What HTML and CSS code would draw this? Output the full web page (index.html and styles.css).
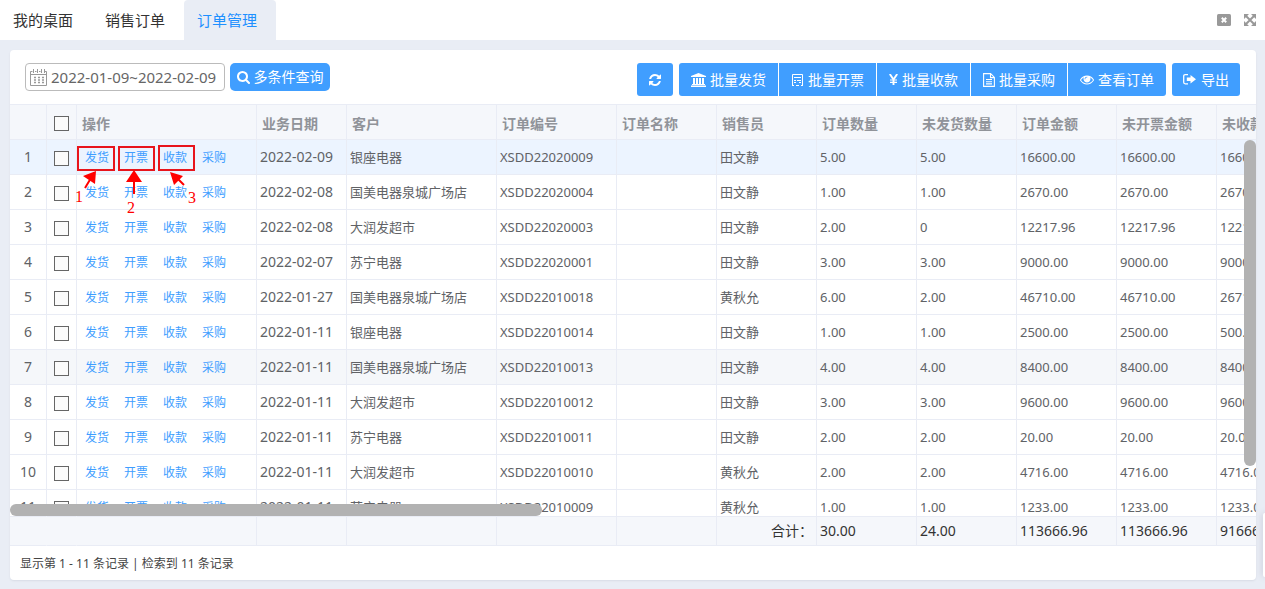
FILE: index.html
```html
<!DOCTYPE html>
<html lang="zh-CN">
<head>
<meta charset="utf-8">
<title>订单管理</title>
<link rel="stylesheet" href="styles.css">
</head>
<body>
<header class="tabbar">
  <nav class="tabs">
    <a class="tab" href="#desktop">我的桌面</a>
    <a class="tab" href="#sales">销售订单</a>
    <a class="tab tab-active" href="#orders">订单管理</a>
  </nav>
  <div class="window-tools">
    <button class="tool" aria-label="关闭"><svg width="14" height="12" viewBox="0 0 14 12"><rect width="14" height="12" rx="1.5" fill="#999"/><path d="M4.800 3.800l4.400 4.400M9.200 3.800l-4.400 4.400" stroke="#fff" stroke-width="2"/></svg></button>
    <button class="tool" aria-label="全屏"><svg width="12" height="12" viewBox="0 0 12 12"><path d="M0 0h5L0 5zM12 0v5L7 0zM0 12V7l5 5zM12 12H7l5-5z" fill="#999"/><path d="M2 2l8 8M10 2l-8 8" stroke="#999" stroke-width="2"/></svg></button>
  </div>
</header>

<main class="panel">
  <div class="toolbar">
    <div class="filters">
      <label class="date-field">
        <svg class="calendar" width="17" height="17" viewBox="0 0 17 17" fill="none" stroke="#999"><path d="M2.500 2.500h-2v14h16v-14h-2M5 2.500h1.500M9 2.500h1.500M.5 5.500h16M3.500 0v4M7.500 0v4M11.500 0v4M14.500 0v4"/><path d="M4 8.500h10M4 11h10M4 13.500h10" stroke-width="1.500" stroke-dasharray="2 2"/></svg>
        <input type="text" aria-label="业务日期范围" value="2022-01-09~2022-02-09">
      </label>
      <button class="btn btn-search"><svg width="13" height="13" viewBox="64 128 1664 1664"><path fill="currentColor" d="M1216 832q0-185-131.500-316.500t-316.500-131.500-316.500 131.500-131.500 316.500 131.500 316.500 316.500 131.500 316.500-131.500 131.500-316.500zm512 832q0 52-38 90t-90 38q-54 0-90-38l-343-342q-179 124-399 124-143 0-273.500-55.500t-225-150-150-225-55.500-273.500 55.500-273.500 150-225 225-150 273.500-55.500 273.500 55.500 225 150 150 225 55.500 273.500q0 220-124 399l343 343q37 37 37 90z"/></svg>多条件查询</button>
    </div>
    <div class="actions">
      <button class="btn btn-refresh" aria-label="刷新"><svg width="12" height="12" viewBox="0 0 1536 1536"><path fill="currentColor" d="M1511 928q0 5-1 7-64 268-268 434.500t-478 166.500q-146 0-282.500-55t-243.500-157l-129 129q-19 19-45 19t-45-19-19-45v-448q0-26 19-45t45-19h448q26 0 45 19t19 45-19 45l-137 137q71 66 161 102t187 36q134 0 250-65t186-179q11-17 53-117 8-23 30-23h192q13 0 22.500 9.500t9.500 22.500zm25-800v448q0 26-19 45t-45 19h-448q-26 0-45-19t-19-45 19-45l138-138q-148-137-349-137-134 0-250 65t-186 179q-11 17-53 117-8 23-30 23h-199q-13 0-22.500-9.500t-9.500-22.500v-7q65-268 270-434.500t480-166.500q146 0 284 55.500t245 156.500l130-129q19-19 45-19t45 19 19 45z"/></svg></button>
      <div class="btn-group">
        <button class="btn"><svg width="15" height="14" viewBox="0 0 15 14" fill="currentColor"><path d="M7.500 0L15 3v1H0V3zM2 5h2v6h1V5h2v6h1V5h2v6h1V5h2v6h1v1H1v-1h1zM0 12.500h15V14H0z"/></svg>批量发货</button>
        <button class="btn"><svg width="13" height="13" viewBox="0 0 13 13" fill="none" stroke="currentColor"><path d="M1.500 12V1.500h10V12M1 12.500h2M5 12.500h3M10 12.500h2M3 4.500h7M3 7.500h2M6 7.500h4M3 9.500h2M8 9.500h2"/></svg>批量开票</button>
        <button class="btn"><svg width="9" height="11" viewBox="0 0 9 11" fill="none" stroke="currentColor"><path d="M.8 0l3.700 5.500L8.200 0M4.500 5v6" stroke-width="1.900"/><path d="M1 6h7M1 8.300h7" stroke-width="1.200"/></svg>批量收款</button>
        <button class="btn"><svg width="12" height="14" viewBox="0 0 12 14" fill="none" stroke="currentColor"><path d="M.6.6h7l3.800 3.800v9H.6zM7.500.6v4h4M3 6.500h6M3 8.700h6M3 10.900h6" stroke-width="1.100"/></svg>批量采购</button>
        <button class="btn"><svg width="14" height="10" viewBox="0 384 1792 1152"><path fill="currentColor" d="M1664 960q-152-236-381-353 61 104 61 225 0 185-131.500 316.500t-316.500 131.500-316.500-131.500-131.500-316.500q0-121 61-225-229 117-381 353 133 205 333.500 326.500t434.500 121.500 434.500-121.500 333.500-326.500zm-720-384q0-20-14-34t-34-14q-125 0-214.500 89.500t-89.500 214.500q0 20 14 34t34 14 34-14 14-34q0-86 61-147t147-61q20 0 34-14t14-34zm848 384q0 34-20 69-140 230-376.500 368.500t-499.500 138.500-499.500-139-376.500-368q-20-35-20-69t20-69q140-229 376.500-368t499.500-139 499.500 139 376.500 368q20 35 20 69z"/></svg>查看订单</button>
      </div>
      <button class="btn btn-export"><svg width="13" height="11" viewBox="0 0 13 11"><path d="M5 .7H2.200Q.7.700.7 2.200v6.100q0 1.500 1.500 1.500H5" fill="none" stroke="currentColor" stroke-width="1.300"/><path d="M7.500 1L13 5.300 7.500 9.600V7H3.800V3.600h3.700z" fill="currentColor"/></svg>导出</button>
    </div>
  </div>

  <div class="grid">
    <table class="grid-head">
      <colgroup><col class="c-no"><col class="c-check"><col class="c-ops"><col class="c-date"><col class="c-customer"><col class="c-code"><col span="7" class="c-std"></colgroup>
      <thead><tr><th></th><th class="check"><input type="checkbox" aria-label="全选"></th><th>操作</th><th>业务日期</th><th>客户</th><th>订单编号</th><th>订单名称</th><th>销售员</th><th>订单数量</th><th>未发货数量</th><th>订单金额</th><th>未开票金额</th><th>未收款金额</th></tr></thead>
    </table>
    <div class="grid-body">
      <table>
        <colgroup><col class="c-no"><col class="c-check"><col class="c-ops"><col class="c-date"><col class="c-customer"><col class="c-code"><col span="7" class="c-std"></colgroup>
        <tbody id="rows"></tbody>
      </table>
      <svg class="marks" width="130" height="80" viewBox="70 140 130 80" aria-hidden="true">
        <g fill="none" stroke="#e8141c" stroke-width="2"><rect x="78" y="147" width="36" height="23"/><rect x="119" y="147" width="35" height="23"/><rect x="159" y="146" width="35" height="24"/></g>
        <g stroke="#f00" stroke-width="2"><path d="M85 188l6-10M134 194v-16M184 185l-8-8"/></g>
        <g fill="#f00"><path d="M96 171l-1 13-12-8zM134 170l8 12h-16zM170 172l13 4-9 9z"/></g>
        <g class="mark-text"><text x="75" y="202">1</text><text x="127" y="213">2</text><text x="188" y="203">3</text></g>
      </svg>
      <div class="scroll-x"></div>
      <div class="scroll-y"></div>
    </div>
    <table class="grid-foot">
      <colgroup><col class="c-no"><col class="c-check"><col class="c-ops"><col class="c-date"><col class="c-customer"><col class="c-code"><col span="7" class="c-std"></colgroup>
      <tbody><tr><td class="plain"></td><td class="plain"></td><td></td><td></td><td></td><td></td><td></td><td class="sum">合计：</td><td>30.00</td><td>24.00</td><td>113666.96</td><td>113666.96</td><td>91666.96</td></tr></tbody>
    </table>
  </div>
  <footer class="pager">显示第 1 - 11 条记录 | 检索到 11 条记录</footer>
</main>
<aside class="drawer"></aside>
<script src="rows.js"></script>
</body>
</html>
```
FILE: rows.js
```js
const orders = [
  ['2022-02-09', '银座电器', 'XSDD22020009', '田文静', '5.00', '5.00', '16600.00', '16600.00', '16600.00'],
  ['2022-02-08', '国美电器泉城广场店', 'XSDD22020004', '田文静', '1.00', '1.00', '2670.00', '2670.00', '2670.00'],
  ['2022-02-08', '大润发超市', 'XSDD22020003', '田文静', '2.00', '0', '12217.96', '12217.96', '12217.96'],
  ['2022-02-07', '苏宁电器', 'XSDD22020001', '田文静', '3.00', '3.00', '9000.00', '9000.00', '9000.00'],
  ['2022-01-27', '国美电器泉城广场店', 'XSDD22010018', '黄秋允', '6.00', '2.00', '46710.00', '46710.00', '26710.00'],
  ['2022-01-11', '银座电器', 'XSDD22010014', '田文静', '1.00', '1.00', '2500.00', '2500.00', '500.00'],
  ['2022-01-11', '国美电器泉城广场店', 'XSDD22010013', '田文静', '4.00', '4.00', '8400.00', '8400.00', '8400.00'],
  ['2022-01-11', '大润发超市', 'XSDD22010012', '田文静', '3.00', '3.00', '9600.00', '9600.00', '9600.00'],
  ['2022-01-11', '苏宁电器', 'XSDD22010011', '田文静', '2.00', '2.00', '20.00', '20.00', '20.00'],
  ['2022-01-11', '大润发超市', 'XSDD22010010', '黄秋允', '2.00', '2.00', '4716.00', '4716.00', '4716.00'],
  ['2022-01-11', '苏宁电器', 'XSDD22010009', '黄秋允', '1.00', '1.00', '1233.00', '1233.00', '1233.00']
];
const links = ['发货', '开票', '收款', '采购'].map(t => `<a href="#">${t}</a>`).join('');
document.getElementById('rows').innerHTML = orders.map((o, i) => {
  const state = i === 0 ? 'selected' : i === 6 ? 'hovered' : '';
  const [date, customer, code, ...rest] = o;
  return `<tr class="${state}"><td class="no">${i + 1}</td>` +
    `<td class="check"><input type="checkbox" aria-label="选择第${i + 1}行"></td>` +
    `<td><div class="ops">${links}</div></td><td class="date">${date}</td><td>${customer}</td><td>${code}</td><td></td>` +
    rest.map(v => `<td>${v}</td>`).join('') + '</tr>';
}).join('');
```
FILE: styles.css
```css
* { box-sizing: border-box; }
body {
  margin: 0;
  height: 100vh;
  display: flex;
  flex-direction: column;
  overflow: hidden;
  background: #e9edf5;
  color: #606266;
  font: 13px/20px "Noto Sans", "Noto Sans CJK SC", sans-serif;
}
a { text-decoration: none; }
button, input { font: inherit; margin: 0; }
button { border: 0; padding: 0; cursor: pointer; }

.tabbar { display: flex; justify-content: space-between; flex: none; height: 40px; background: #fff; }
.tabs { display: flex; }
.tab { padding: 0 19px 0 13px; font-size: 15px; line-height: 40px; color: #333; }
.tab-active { background: #e9edf5; color: #1e90ff; border-radius: 4px 4px 0 0; }
.window-tools { display: flex; align-items: center; gap: 13px; padding-right: 9px; }
.tool { display: flex; background: none; }

.panel {
  flex: 1;
  min-height: 0;
  display: flex;
  flex-direction: column;
  margin: 10px 9px 9px 10px;
  background: #fff;
  border-radius: 4px;
  box-shadow: 0 1px 2px #d8dce5;
  overflow: hidden;
}
.toolbar { display: flex; justify-content: space-between; flex: none; height: 54px; padding: 13px 16px 0 15px; }
.filters, .actions { display: flex; align-items: flex-start; gap: 5px; }
.actions { gap: 6px; }
.date-field {
  display: flex;
  align-items: center;
  gap: 4px;
  width: 200px;
  height: 28px;
  padding: 0 4px;
  border: 1px solid #bbb;
  border-radius: 4px;
}
.calendar { flex: none; }
.date-field input { flex: 1; min-width: 0; padding: 0; border: 0; outline: 0; background: none; color: #666; font-size: 15px; }
.btn {
  display: flex;
  align-items: center;
  justify-content: center;
  gap: 4px;
  height: 33px;
  padding: 0 12px;
  background: #409eff;
  color: #fff;
  font-size: 14px;
  border-radius: 3px;
  white-space: nowrap;
}
.btn-search { height: 28px; width: 100px; padding: 0; border-radius: 5px; }
.btn-refresh { width: 36px; }
.btn-export { gap: 5px; }
.btn-export { padding: 0 11px; }
.btn-group { display: flex; gap: 1px; }
.btn-group .btn { border-radius: 0; }
.btn-group .btn:first-child { border-radius: 3px 0 0 3px; }
.btn-group .btn:last-child { border-radius: 0 3px 3px 0; }

.grid { flex: 1; min-height: 0; display: flex; flex-direction: column; border-top: 1px solid #e9ecf5; }
table { flex: none; width: 1307px; table-layout: fixed; border-collapse: separate; border-spacing: 0; }
.c-no { width: 37px; }
.c-check { width: 30px; }
.c-ops { width: 180px; }
.c-date { width: 90px; }
.c-customer { width: 150px; }
.c-code { width: 120px; }
.c-std { width: 100px; }
th, td {
  height: 35px;
  padding: 0 3px;
  text-align: left;
  white-space: nowrap;
  border-right: 1px solid #e9ecf5;
  border-bottom: 1px solid #e9ecf5;
}
th { padding: 3px 5px 0; background: #f5f7fb; color: #909399; font-size: 14px; font-weight: 700; }
.no { text-align: center; font-size: 14px; }
.date { font-size: 14px; }
.check { padding: 3px 0 0; text-align: center; }
.check input {
  appearance: none;
  display: block;
  width: 15px;
  height: 15px;
  margin: 0 auto;
  border: 1px solid #666;
  background: #fbfbfb;
}
.ops { display: flex; gap: 15px; padding: 2px 0 0 5px; font-size: 12px; }
.ops a { color: #409eff; }
.selected td { background: #ecf4ff; }
.hovered td { background: #f5f7fa; }
.grid-body { position: relative; flex: 1; min-height: 0; overflow: hidden; }
.marks { position: absolute; left: 60px; top: 0; pointer-events: none; }
.mark-text { font: 16px "Liberation Serif", serif; fill: #f00; }
.scroll-x, .scroll-y { position: absolute; background: #b2b2b2; border-radius: 6px; }
.scroll-x { left: 0; bottom: 0; width: 532px; height: 12px; }
.scroll-y { right: 0; top: 0; width: 12px; height: 326px; }
.grid-foot td { height: 30px; background: #f5f7fb; color: #333; font-size: 14px; border-top: 1px solid #e9ecf5; }
.grid-foot .plain { border-right-color: #f5f7fb; }
.grid-foot .sum { text-align: right; }
.pager { flex: none; height: 34px; padding-left: 10px; font-size: 12px; line-height: 36px; color: #444; }
.drawer {
  position: fixed;
  right: 0;
  bottom: 12px;
  width: 2px;
  height: 64px;
  background: #fff;
  border-radius: 4px 0 0 4px;
  box-shadow: 0 0 6px #aab;
}
```
